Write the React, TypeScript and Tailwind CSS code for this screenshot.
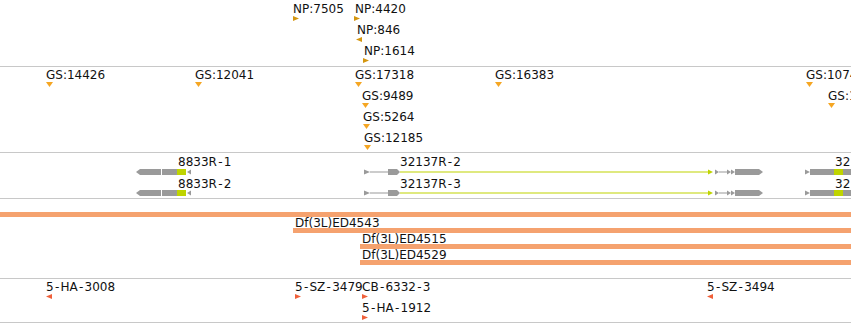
import React from "react";

type Dir = "right" | "left" | "down";

type Feat = { x: number; row: number; label: string; dir: Dir; tx?: number };

// the browser font draws hyphens wider than DejaVu does
function Name({ text }: { text: string }) {
  const parts = text.split("-");
  return (
    <>
      {parts.map((p, i) => (
        <React.Fragment key={i}>
          {i > 0 && <span className="px-[1.25px]">-</span>}
          {p}
        </React.Fragment>
      ))}
    </>
  );
}

// triangle glyph under each label
function Tri({ dir, color }: { dir: Dir; color: string }) {
  if (dir === "down") {
    return (
      <svg width="7" height="5" viewBox="0 0 7 5" className="block">
        <polygon points="0,0 7,0 3.5,5" fill={color} />
      </svg>
    );
  }
  return (
    <svg width="6" height="5" viewBox="0 0 6 5" className="block">
      <polygon points={dir === "right" ? "0,0 6,2.5 0,5" : "6,0 0,2.5 6,5"} fill={color} />
    </svg>
  );
}

function PointTrack({
  feats,
  color,
  top,
  className,
}: {
  feats: Feat[];
  color: string;
  top: number;
  className: string;
}) {
  return (
    <div className={`relative border-b border-[#c8c8c8] ${className}`}>
      {feats.map((f, i) => (
        <React.Fragment key={i}>
          <div
            className="absolute whitespace-nowrap text-[12px] leading-[14px] text-[#111]"
            style={{ left: f.x, top: top + f.row * 21 }}
          >
            <Name text={f.label} />
          </div>
          <div className="absolute" style={{ left: f.tx ?? f.x, top: top + f.row * 21 + 14 }}>
            <Tri dir={f.dir} color={color} />
          </div>
        </React.Fragment>
      ))}
    </div>
  );
}

const npFeats: Feat[] = [
  { x: 293, row: 0, label: "NP:7505", dir: "right" },
  { x: 355, row: 0, label: "NP:4420", dir: "right", tx: 354 },
  { x: 357, row: 1, label: "NP:846", dir: "left", tx: 356 },
  { x: 364, row: 2, label: "NP:1614", dir: "right", tx: 363 },
];

const gsFeats: Feat[] = [
  { x: 46, row: 0, label: "GS:14426", dir: "down" },
  { x: 195, row: 0, label: "GS:12041", dir: "down" },
  { x: 355, row: 0, label: "GS:17318", dir: "down" },
  { x: 495, row: 0, label: "GS:16383", dir: "down" },
  { x: 806, row: 0, label: "GS:10742", dir: "down" },
  { x: 362, row: 1, label: "GS:9489", dir: "down" },
  { x: 828, row: 1, label: "GS:13390", dir: "down" },
  { x: 363, row: 2, label: "GS:5264", dir: "down" },
  { x: 364, row: 3, label: "GS:12185", dir: "down" },
];

const rnaFeats: Feat[] = [
  { x: 46, row: 0, label: "5-HA-3008", dir: "left" },
  { x: 295, row: 0, label: "5-SZ-3479", dir: "right" },
  { x: 362, row: 0, label: "CB-6332-3", dir: "right" },
  { x: 707, row: 0, label: "5-SZ-3494", dir: "left" },
  { x: 362, row: 1, label: "5-HA-1912", dir: "right" },
];

const GRAY = "#9a9a9a";
const LIME = "#bfd400";

// one transcript row of the gene track
function GeneRow() {
  return (
    <svg width="851" height="8" viewBox="0 0 851 8" className="block">
      {/* 8833R */}
      <polygon points="136,4 140,1 161,1 161,7 140,7" fill={GRAY} />
      <rect x="162" y="1" width="15" height="6" fill={GRAY} />
      <rect x="177" y="1" width="9" height="6" fill={LIME} />
      <polygon points="187,4 191,1.5 191,6.5" fill={GRAY} />
      {/* 32137R */}
      <polygon points="364,1.5 370,4 364,6.5" fill={GRAY} />
      <rect x="370" y="3.5" width="18" height="1" fill={GRAY} />
      <polygon points="388,1 397,1 400,4 397,7 388,7" fill={GRAY} />
      <rect x="400" y="3.5" width="308" height="1" fill={LIME} />
      <polygon points="708,1.5 713,4 708,6.5" fill={LIME} />
      <polygon points="715,1.5 719,4 715,6.5" fill={GRAY} />
      <rect x="719" y="3.5" width="8" height="1" fill={GRAY} />
      <polygon points="727,1.5 731,4 727,6.5" fill={GRAY} />
      <polygon points="731,1.5 735,4 731,6.5" fill={GRAY} />
      <polygon points="735,1 759,1 763,4 759,7 735,7" fill={GRAY} />
      {/* right edge gene */}
      <polygon points="805,1.5 810,4 805,6.5" fill={GRAY} />
      <rect x="810" y="1" width="24" height="6" fill={GRAY} />
      <rect x="834" y="1" width="9" height="6" fill={LIME} />
      <rect x="843" y="1" width="8" height="6" fill={GRAY} />
    </svg>
  );
}

const geneLabels = [
  { x: 178, row: 0, label: "8833R-1" },
  { x: 178, row: 1, label: "8833R-2" },
  { x: 400, row: 0, label: "32137R-2" },
  { x: 400, row: 1, label: "32137R-3" },
  { x: 835, row: 0, label: "32137R-1" },
  { x: 835, row: 1, label: "32137R-4" },
];

const deletions = [
  { x: 293, label: "Df(3L)ED4543" },
  { x: 360, label: "Df(3L)ED4515" },
  { x: 360, label: "Df(3L)ED4529" },
];

export default function App() {
  return (
    <div className="w-[851px] h-[324px] overflow-hidden bg-white font-['DejaVu_Sans',sans-serif] flex flex-col">
      <PointTrack feats={npFeats} color="#d4960f" top={2} className="h-[67px] shrink-0" />
      <PointTrack feats={gsFeats} color="#f5a623" top={1} className="h-[86px] shrink-0" />

      {/* gene models */}
      <div className="relative h-[46px] shrink-0 border-b border-[#c8c8c8]">
        {geneLabels.map((g, i) => (
          <div
            key={i}
            className="absolute whitespace-nowrap text-[12px] leading-[14px] text-[#111]"
            style={{ left: g.x, top: 2 + g.row * 22 }}
          >
            <Name text={g.label} />
          </div>
        ))}
        <div className="absolute left-0 top-[15px]">
          <GeneRow />
        </div>
        <div className="absolute left-0 top-[36px]">
          <GeneRow />
        </div>
      </div>

      {/* deficiencies */}
      <div className="relative h-[80px] shrink-0 border-b border-[#c8c8c8]">
        <div className="absolute left-0 right-0 top-[13px] h-[5px] bg-[#f5a26f]" />
        {deletions.map((d, i) => (
          <React.Fragment key={i}>
            <div
              className="absolute whitespace-nowrap text-[12px] leading-[14px] text-[#111]"
              style={{ left: d.x + 2, top: 17 + i * 16 }}
            >
              {d.label}
            </div>
            <div
              className="absolute right-0 h-[5px] bg-[#f5a26f]"
              style={{ left: d.x, top: 29 + i * 16 }}
            />
          </React.Fragment>
        ))}
      </div>

      <PointTrack feats={rnaFeats} color="#f0603a" top={1} className="h-[44px] shrink-0" />
    </div>
  );
}
